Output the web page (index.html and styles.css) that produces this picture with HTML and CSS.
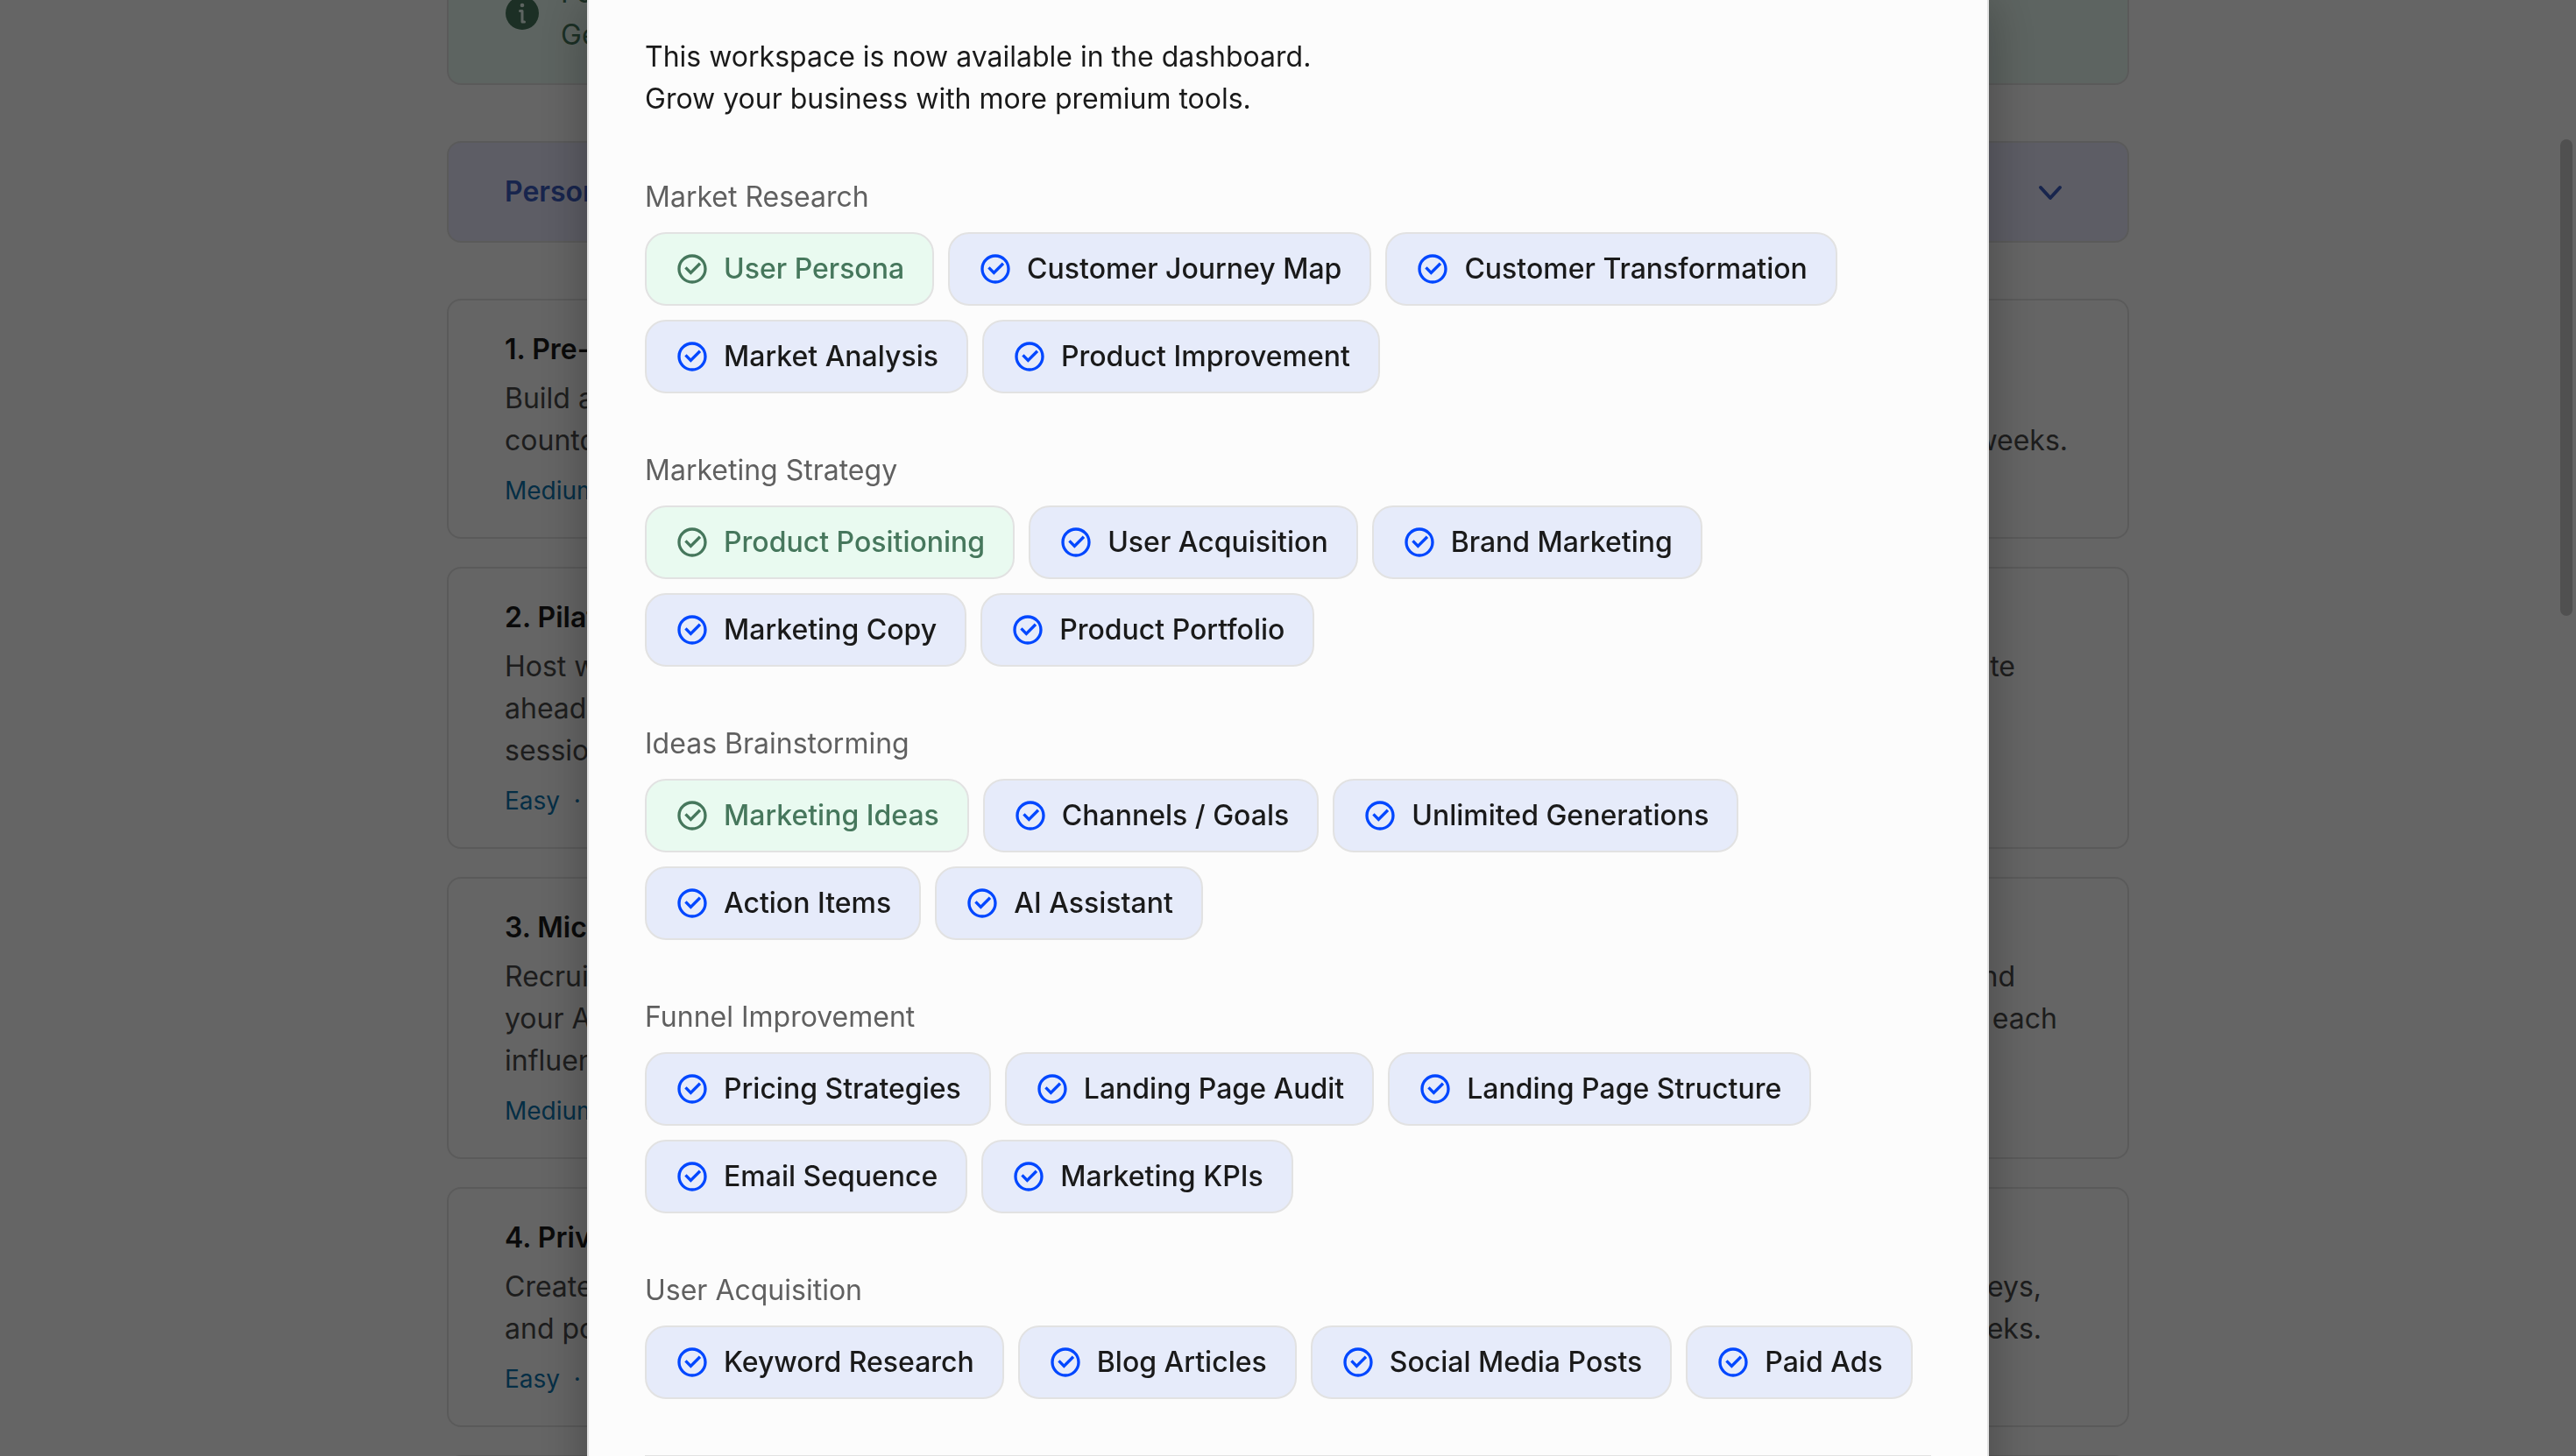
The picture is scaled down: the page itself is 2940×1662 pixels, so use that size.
FILE: index.html
```
<!DOCTYPE html>
<html lang="en">
<head>
<meta charset="utf-8">
<title>Workspace unlocked</title>
<link rel="stylesheet" href="styles.css">
</head>
<body>
<svg class="sprite" aria-hidden="true">
  <symbol id="check" viewBox="0 0 24 24">
    <path d="M12 22C6.477 22 2 17.523 2 12S6.477 2 12 2s10 4.477 10 10-4.477 10-10 10zm0-2a8 8 0 1 0 0-16 8 8 0 0 0 0 16zm-.997-4L6.76 11.757l1.414-1.414 2.829 2.829 5.656-5.657 1.415 1.414L11.003 16z"/>
  </symbol>
</svg>

<main class="page">
  <section class="notice">
    <svg class="notice-icon" viewBox="0 0 40 40" aria-hidden="true">
      <circle cx="20" cy="20" r="19"/>
      <circle class="notice-mark" cx="20" cy="11" r="2.300"/>
      <path class="notice-line" d="M17.500 17.500h2.500v12.500h2.500"/>
    </svg>
    <p>For better results, complete your workspace.<br>Get more ideas with premium tools.</p>
  </section>

  <button class="accordion" type="button">
    <span>Personalized Ideas</span>
    <svg class="chevron" viewBox="0 0 48 40" aria-hidden="true"><path d="M13 15l11 12 11-12"/></svg>
  </button>

  <div class="ideas">
    <article class="idea">
      <h2>1. Pre-Launch Waitlist</h2>
      <div class="idea-text"><p>Build a landing page with a</p><p>&nbsp;</p><p>countdown timer and early access</p><p>over the next few weeks.</p></div>
      <p class="meta">Medium &nbsp;·&nbsp; Growth</p>
    </article>
    <article class="idea">
      <h2>2. Pilates Webinar</h2>
      <div class="idea-text"><p>Host weekly live classes</p><p class="short">and create</p><p>ahead of the launch</p><p>&nbsp;</p><p>sessions for members</p><p>&nbsp;</p></div>
      <p class="meta">Easy &nbsp;·&nbsp; Content</p>
    </article>
    <article class="idea">
      <h2>3. Micro-Influencers</h2>
      <div class="idea-text"><p>Recruit local creators</p><p class="short">and</p><p>your App with a code for</p><p class="mid">each</p><p>influencer to share</p><p>&nbsp;</p></div>
      <p class="meta">Medium &nbsp;·&nbsp; Social</p>
    </article>
    <article class="idea">
      <h2>4. Private Community</h2>
      <div class="idea-text"><p>Create a group with</p><p class="long">surveys,</p><p>and polls to engage</p><p class="long">over weeks.</p></div>
      <p class="meta">Easy &nbsp;·&nbsp; Community</p>
    </article>
    <article class="idea"><h2>5. Referral Program</h2></article>
  </div>
</main>
<div class="scroll-thumb"></div>

<div class="overlay">
  <div class="modal" role="dialog" aria-modal="true" aria-label="Workspace tools">
    <p class="intro">This workspace is now available in the dashboard.<br>Grow your business with more premium tools.</p>

    <section class="group">
      <h3>Market Research</h3>
      <ul>
        <li class="done"><svg><use href="#check"/></svg>User Persona</li>
        <li><svg><use href="#check"/></svg>Customer Journey Map</li>
        <li><svg><use href="#check"/></svg>Customer Transformation</li>
        <li><svg><use href="#check"/></svg>Market Analysis</li>
        <li><svg><use href="#check"/></svg>Product Improvement</li>
      </ul>
    </section>
    <section class="group">
      <h3>Marketing Strategy</h3>
      <ul>
        <li class="done"><svg><use href="#check"/></svg>Product Positioning</li>
        <li><svg><use href="#check"/></svg>User Acquisition</li>
        <li><svg><use href="#check"/></svg>Brand Marketing</li>
        <li><svg><use href="#check"/></svg>Marketing Copy</li>
        <li><svg><use href="#check"/></svg>Product Portfolio</li>
      </ul>
    </section>
    <section class="group">
      <h3>Ideas Brainstorming</h3>
      <ul>
        <li class="done"><svg><use href="#check"/></svg>Marketing Ideas</li>
        <li><svg><use href="#check"/></svg>Channels / Goals</li>
        <li><svg><use href="#check"/></svg>Unlimited Generations</li>
        <li><svg><use href="#check"/></svg>Action Items</li>
        <li><svg><use href="#check"/></svg>AI Assistant</li>
      </ul>
    </section>
    <section class="group">
      <h3>Funnel Improvement</h3>
      <ul>
        <li><svg><use href="#check"/></svg>Pricing Strategies</li>
        <li><svg><use href="#check"/></svg>Landing Page Audit</li>
        <li><svg><use href="#check"/></svg>Landing Page Structure</li>
        <li><svg><use href="#check"/></svg>Email Sequence</li>
        <li><svg><use href="#check"/></svg>Marketing KPIs</li>
      </ul>
    </section>
    <section class="group">
      <h3>User Acquisition</h3>
      <ul>
        <li><svg><use href="#check"/></svg>Keyword Research</li>
        <li><svg><use href="#check"/></svg>Blog Articles</li>
        <li><svg><use href="#check"/></svg>Social Media Posts</li>
        <li><svg><use href="#check"/></svg>Paid Ads</li>
      </ul>
    </section>
    <hr>
  </div>
</div>
</body>
</html>
```
FILE: styles.css
```
* { box-sizing: border-box; margin: 0; padding: 0; }

html, body { height: 100%; overflow: hidden; }

body {
  background: #fcfcfc;
  color: #1a1a1a;
  font: 400 32px/48px Inter, "Liberation Sans", sans-serif;
}

.sprite { display: none; }

.page {
  display: flex;
  flex-direction: column;
  gap: 64px;
  max-width: 1920px;
  margin: 0 auto;
}

.notice {
  display: flex;
  align-items: flex-start;
  gap: 24px;
  height: 97px;
  padding: 0 64px 32px;
  border: 2px solid #e2e2e2;
  border-top: 0;
  border-radius: 0 0 16px 16px;
  background: #e9faf2;
  color: #46775c;
}
.notice p { margin-top: -32px; }
.notice-icon { flex: none; width: 40px; height: 40px; margin-top: -5px; fill: #46775c; }
.notice-icon .notice-mark { fill: #e9faf2; }
.notice-icon .notice-line { fill: none; stroke: #e9faf2; stroke-width: 3; stroke-linecap: round; stroke-linejoin: round; }

.accordion {
  display: flex;
  align-items: center;
  justify-content: space-between;
  padding: 32px 64px;
  border: 2px solid #e2e2e2;
  border-radius: 16px;
  background: #e8e8fc;
  color: #3c5cc0;
  font: inherit;
  font-weight: 600;
}
.chevron { width: 48px; height: 40px; fill: none; stroke: #3c5cc0; stroke-width: 4; stroke-linecap: round; stroke-linejoin: round; }

.ideas { display: flex; flex-direction: column; gap: 32px; }
.idea {
  display: flex;
  flex-direction: column;
  padding: 32px 64px;
  border: 2px solid #e2e2e2;
  border-radius: 16px;
}
.idea h2 { margin-bottom: 8px; font-size: 32px; font-weight: 600; }
.idea-text { display: grid; grid-template-columns: 1fr 1fr; color: #4a4a4a; }
.idea-text p:nth-child(even) { padding-right: 4px; text-align: right; }
.idea-text p.short { padding-right: 64px; }
.idea-text p.mid { padding-right: 16px; }
.idea-text p.long { padding-right: 34px; }
.meta { margin-top: 12px; color: #0d74ad; font-size: 28px; line-height: 42px; }

.scroll-thumb {
  position: fixed;
  top: 159px;
  right: 4px;
  width: 14px;
  height: 544px;
  border-radius: 7px;
  background: #c8c8c8;
}

.overlay {
  position: fixed;
  inset: 0;
  display: flex;
  justify-content: center;
  overflow: hidden;
  background: rgba(0, 0, 0, 0.6);
}

.modal {
  display: flex;
  flex-direction: column;
  gap: 64px;
  width: 1600px;
  max-width: 100%;
  height: max-content;
  padding: 41px 64px 64px;
  border: 2px solid #e2e2e2;
  border-top: 0;
  background: #fcfcfc;
  box-shadow: 0 0 56px rgba(0, 0, 0, 0.3);
}

.group h3 { margin-bottom: 16px; color: #606060; font-size: 32px; font-weight: 400; }
.group ul { display: flex; flex-wrap: wrap; gap: 16px; list-style: none; }
.group li {
  display: flex;
  align-items: center;
  gap: 16px;
  padding: 16px 32px;
  border: 2px solid #e2e2e2;
  border-radius: 24px;
  background: #e6ebfa;
  font-weight: 500;
}
.group svg { width: 40px; height: 40px; color: #0047ff; fill: currentColor; }
.group .done { background: #e9faf0; color: #46775c; }
.group .done svg { color: #46775c; }

hr { border: 0; border-top: 2px solid #e2e2e2; }
```
